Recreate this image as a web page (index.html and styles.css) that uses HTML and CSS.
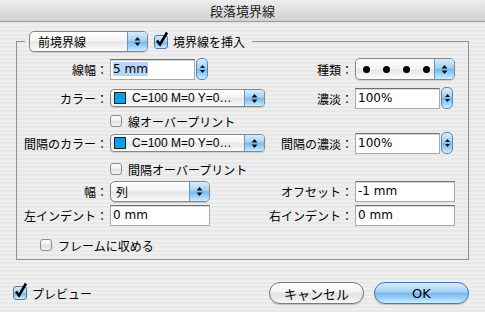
FILE: index.html
```html
<!DOCTYPE html>
<html lang="ja">
<head>
    <meta charset="UTF-8">
    <title>段落境界線</title>
    <link rel="stylesheet" href="styles.css">
</head>
<body>
    <div class="titlebar">段落境界線</div>

    <fieldset class="group">
        <legend class="group-head">
            <div class="head-row">
                <div class="popup popup-head">
                    <span class="popup-text">前境界線</span>
                    <span class="popup-arrows"><svg width="7" height="11" viewBox="0 0 7 11"><path d="M3.5 1 6.5 4.5H.5Z M3.5 10 6.5 6.5H.5Z" fill="#111"/></svg></span>
                </div>
                <label class="check">
                    <span class="box box-big checked"><svg width="15" height="17" viewBox="0 0 15 17"><path d="M3 9.5 6 13.5 13 1.5" stroke="#000" stroke-width="2.6" fill="none"/></svg></span>
                    境界線を挿入
                </label>
            </div>
        </legend>

        <div class="grid">
            <span class="label">線幅：</span>
            <div class="spin">
                <div class="field field-spin"><span class="sel">5 mm</span></div>
                <span class="stepper"><svg width="5" height="10" viewBox="0 0 5 10"><path d="M2.5 1 5 4H0Z M2.5 9 5 6H0Z" fill="#111"/></svg></span>
            </div>
            <span class="label">種類：</span>
            <div class="popup popup-dots">
                <span class="popup-text dots"><i></i><i></i><i></i><i></i></span>
                <span class="popup-arrows"><svg width="7" height="11" viewBox="0 0 7 11"><path d="M3.5 1 6.5 4.5H.5Z M3.5 10 6.5 6.5H.5Z" fill="#111"/></svg></span>
            </div>

            <span class="label">カラー：</span>
            <div class="popup popup-color">
                <span class="popup-text"><span class="swatch"></span>C=100 M=0 Y=0…</span>
                <span class="popup-arrows"><svg width="7" height="11" viewBox="0 0 7 11"><path d="M3.5 1 6.5 4.5H.5Z M3.5 10 6.5 6.5H.5Z" fill="#111"/></svg></span>
            </div>
            <span class="label">濃淡：</span>
            <div class="spin">
                <div class="field field-spin">100%</div>
                <span class="stepper"><svg width="5" height="10" viewBox="0 0 5 10"><path d="M2.5 1 5 4H0Z M2.5 9 5 6H0Z" fill="#111"/></svg></span>
            </div>

            <span></span>
            <label class="check check-small span3"><span class="box"></span>線オーバープリント</label>

            <span class="label">間隔のカラー：</span>
            <div class="popup popup-color">
                <span class="popup-text"><span class="swatch"></span>C=100 M=0 Y=0…</span>
                <span class="popup-arrows"><svg width="7" height="11" viewBox="0 0 7 11"><path d="M3.5 1 6.5 4.5H.5Z M3.5 10 6.5 6.5H.5Z" fill="#111"/></svg></span>
            </div>
            <span class="label">間隔の濃淡：</span>
            <div class="spin">
                <div class="field field-spin">100%</div>
                <span class="stepper"><svg width="5" height="10" viewBox="0 0 5 10"><path d="M2.5 1 5 4H0Z M2.5 9 5 6H0Z" fill="#111"/></svg></span>
            </div>

            <span></span>
            <label class="check check-small span3"><span class="box"></span>間隔オーバープリント</label>

            <span class="label">幅：</span>
            <div class="popup popup-short">
                <span class="popup-text">列</span>
                <span class="popup-arrows"><svg width="7" height="11" viewBox="0 0 7 11"><path d="M3.5 1 6.5 4.5H.5Z M3.5 10 6.5 6.5H.5Z" fill="#111"/></svg></span>
            </div>
            <span class="label">オフセット：</span>
            <div class="field field-wide">-1 mm</div>

            <span class="label">左インデント：</span>
            <div class="field field-wide">0 mm</div>
            <span class="label">右インデント：</span>
            <div class="field field-wide">0 mm</div>

            <label class="check check-small check-frame"><span class="box"></span>フレームに収める</label>
        </div>
    </fieldset>

    <div class="actions">
        <label class="check">
            <span class="box box-big checked"><svg width="15" height="17" viewBox="0 0 15 17"><path d="M3 9.5 6 13.5 13 1.5" stroke="#000" stroke-width="2.6" fill="none"/></svg></span>
            プレビュー
        </label>
        <button class="btn btn-cancel">キャンセル</button>
        <button class="btn btn-ok">OK</button>
    </div>
</body>
</html>
```

FILE: styles.css
```css
body {
    margin: 0;
    width: 485px;
    height: 312px;
    overflow: hidden;
    font-family: 'Noto Sans CJK JP', sans-serif;
    font-size: 12px;
    color: #000;
    background: repeating-linear-gradient(to bottom, #efefef 0 2px, #e8e8e8 2px 4px);
}
.titlebar {
    height: 21px;
    line-height: 21px;
    text-align: center;
    font-size: 13px;
    color: #1a1a1a;
    background: linear-gradient(#ededed, #d2d2d2);
    border-bottom: 1px solid #9a9a9a;
}
.group {
    margin: 9px 16px 0;
    padding: 5px 10px 0 0;
    min-width: 0;
    border: 1px solid #8f8f8f;
}
.group-head {
    margin-left: 8px;
    padding: 0 7px 0 4px;
}
.head-row {
    display: flex;
    align-items: center;
    gap: 6px;
}

/* popup buttons */
.popup {
    box-sizing: border-box;
    display: flex;
    height: 21px;
    border: 1px solid #868686;
    border-radius: 5px;
    overflow: hidden;
    background: linear-gradient(#ffffff, #f4f4f4 45%, #e6e6e6 55%, #fbfbfb);
    box-shadow: 0 1px 1px rgba(0, 0, 0, 0.15);
}
.popup-text {
    flex: 1;
    display: flex;
    align-items: center;
    padding-left: 8px;
    white-space: nowrap;
    overflow: hidden;
}
.popup-arrows {
    width: 19px;
    flex-shrink: 0;
    display: flex;
    align-items: center;
    justify-content: center;
    border-left: 1px solid #6d93c4;
    background: linear-gradient(#d6edfd, #a3d1f5 45%, #76b8ef 52%, #a3d6fb 80%, #cdeeff);
}
.popup-head {
    width: 119px;
}
.popup-dots {
    width: 100px;
    height: 22px;
}
.dots {
    gap: 13px;
    padding-left: 7px;
}
.dots i {
    width: 7px;
    height: 7px;
    border-radius: 50%;
    background: #000;
}
.popup-color {
    width: 155px;
    height: 18px;
    border-radius: 4px;
}
.popup-color .popup-text {
    padding-left: 3px;
    font-family: 'Liberation Sans', sans-serif;
    font-size: 12px;
}
.swatch {
    box-sizing: border-box;
    flex-shrink: 0;
    width: 12px;
    height: 12px;
    margin-right: 6px;
    background: #0aa0e6;
    border: 1px solid #222;
}
.popup-short {
    width: 100px;
}
.popup-short .popup-text {
    padding-left: 5px;
}

/* text fields */
.field {
    box-sizing: border-box;
    height: 21px;
    padding: 1px 2px;
    line-height: 16px;
    font-family: 'DejaVu Sans', sans-serif;
    font-size: 12px;
    background: #fff;
    border: 1px solid #a9a9a9;
    border-top-color: #6f6f6f;
    box-shadow: inset 0 1px 0 #d8d8d8;
}
.field-spin {
    width: 85px;
}
.field-wide {
    width: 100px;
}
.sel {
    background: #b5d5ff;
}
.spin {
    display: flex;
    align-items: center;
}
.stepper {
    box-sizing: border-box;
    width: 12px;
    height: 22px;
    margin-left: 1px;
    display: flex;
    align-items: center;
    justify-content: center;
    border: 1px solid #5d86b9;
    border-radius: 5px;
    background: linear-gradient(#d6edfd, #a3d1f5 45%, #76b8ef 52%, #a3d6fb 80%, #cdeeff);
}

/* checkboxes */
.check {
    display: flex;
    align-items: center;
    gap: 5px;
    white-space: nowrap;
}
.box {
    position: relative;
    box-sizing: border-box;
    width: 12px;
    height: 12px;
    border: 1px solid #8c8c8c;
    border-radius: 3px;
    background: linear-gradient(#ffffff, #ececec 50%, #dedede 55%, #f6f6f6);
}
.box-big {
    width: 14px;
    height: 14px;
}
.box.checked {
    border-color: #4f78ad;
    background: linear-gradient(#d6edfd, #a3d1f5 45%, #76b8ef 52%, #a3d6fb 80%, #cdeeff);
}
.box svg {
    position: absolute;
    left: -1px;
    top: -5px;
}
.check-small {
    gap: 6px;
}

/* layout grid of the group */
.grid {
    display: grid;
    grid-template-columns: 91px 155px 86px 102px;
    grid-template-rows: 24px 34px 12px 32px 20px 24px 24px 32px;
    column-gap: 2px;
    align-items: center;
}
.label {
    text-align: right;
    white-space: nowrap;
}
.span3 {
    grid-column: 2 / 5;
}
.check-frame {
    grid-column: 1 / 5;
    padding-left: 23px;
    margin-top: 4px;
}

/* bottom buttons */
.actions {
    display: flex;
    align-items: center;
    margin-top: 22px;
    padding: 0 16px 0 13px;
}
.btn {
    width: 95px;
    height: 22px;
    padding: 0;
    font-family: 'Noto Sans CJK JP', sans-serif;
    font-size: 13px;
    border: 1px solid #7b7b7b;
    border-radius: 11px;
    background: linear-gradient(#ffffff, #f2f2f2 45%, #e1e1e1 55%, #f7f7f7);
    box-shadow: 0 1px 1px rgba(0, 0, 0, 0.2);
}
.btn-cancel {
    margin-left: auto;
}
.btn-ok {
    margin-left: 10px;
    border-color: #4a77b0;
    background: linear-gradient(#d6edfd, #a3d1f5 45%, #76b8ef 52%, #a3d6fb 80%, #cdeeff);
    font-family: 'DejaVu Sans', sans-serif;
}
```
